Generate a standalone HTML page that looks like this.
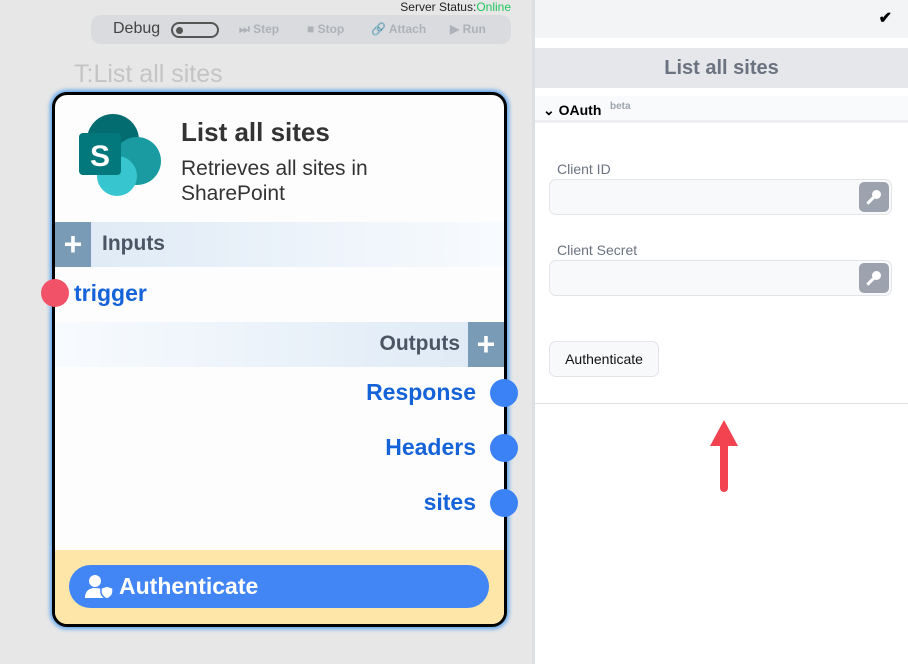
<!DOCTYPE html>
<html><head><meta charset="utf-8"><style>
*{box-sizing:border-box;margin:0;padding:0}
body{width:908px;height:664px;background:#e7e7e7;font-family:"Liberation Sans",sans-serif;position:relative;overflow:hidden}
.abs{position:absolute}
.status{right:397px;top:0;font-size:12px;color:#222}
.dbg{left:91px;top:15px;width:420px;height:29px;background:#d9dbdf;border-radius:10px}
.dbg span{position:absolute;top:7px;font-size:12px;color:#aeb2b8;font-weight:bold}
.ttl{left:74px;top:60px;font-size:25px;color:#c4c4c4}
.node{left:52px;top:92px;width:455px;height:535px;border:3px solid #000;border-radius:15px;background:#fdfdfd;box-shadow:0 0 4px 2px #5aa2ee}
.bar{position:absolute;height:45px;font-size:21px;font-weight:bold;color:#4b5563}
.plus{position:absolute;top:0;width:36px;height:45px;background:#7a9bb5;color:#fff;font-size:32px;text-align:center;line-height:44px;font-weight:bold}
.lbl{position:absolute;font-size:23px;font-weight:bold;color:#1563d8}
.dot{position:absolute;width:28px;height:28px;border-radius:50%;background:#3b82f6}
.panel{left:532px;top:0;width:376px;height:664px;background:#fff;border-left:3px solid #dcdfe3}
.inp{position:absolute;left:14px;width:343px;height:36px;border:1px solid #e2e4e8;border-radius:7px;background:#f8f9fb}
.key{position:absolute;right:2px;top:2px;width:30px;height:30px;background:#9ca3af;border-radius:5px}
.fl{position:absolute;left:22px;font-size:14px;color:#6b7280}
</style></head><body>
<div class="abs status">Server Status:<span style="color:#22c55e">Online</span></div>
<div class="abs dbg">
<span style="left:22px;top:5px;font-size:16px;color:#444;font-weight:normal">Debug</span>
<div class="abs" style="left:80px;top:7px;width:48px;height:16px;border:2px solid #555;border-radius:9px"><div class="abs" style="left:3px;top:3px;width:7px;height:7px;border-radius:50%;background:#555"></div></div>
<span style="left:148px">⏭ Step</span><span style="left:216px">■ Stop</span><span style="left:280px">🔗 Attach</span><span style="left:359px">▶ Run</span>
</div>
<div class="abs ttl">T:List all sites</div>
<div class="abs node">
<svg class="abs" style="left:24px;top:19px" width="84" height="84" viewBox="0 0 84 84">
<circle cx="34" cy="26" r="26" fill="#036c70"/><circle cx="58" cy="47" r="24" fill="#1a9ba1"/><circle cx="38" cy="62" r="20" fill="#37c6d0"/>
<rect x="0" y="19" width="42" height="42" rx="4" fill="#03787c"/>
<text x="21" y="52" font-size="30" font-weight="bold" fill="#fff" text-anchor="middle" font-family="Liberation Sans">S</text></svg>
<div class="abs" style="left:126px;top:22px;font-size:26px;font-weight:bold;color:#333">List all sites</div>
<div class="abs" style="left:126px;top:61px;font-size:21px;color:#333;line-height:25px">Retrieves all sites in<br>SharePoint</div>
<div class="bar" style="left:0;top:127px;width:449px;background:linear-gradient(90deg,#dde9f5,#f8fbfe)"><div class="plus" style="left:0">+</div><span class="abs" style="left:47px;top:10px">Inputs</span></div>
<div class="abs" style="left:-14px;top:184px;width:28px;height:28px;border-radius:50%;background:#f25268"></div>
<div class="lbl" style="left:19px;top:185px">trigger</div>
<div class="bar" style="left:0;top:227px;width:449px;background:linear-gradient(90deg,#f8fbfe,#dde9f5)"><span class="abs" style="right:44px;top:10px">Outputs</span><div class="plus" style="right:0">+</div></div>
<div class="lbl" style="right:28px;top:284px">Response</div><div class="dot" style="right:-14px;top:284px"></div>
<div class="lbl" style="right:28px;top:339px">Headers</div><div class="dot" style="right:-14px;top:339px"></div>
<div class="lbl" style="right:28px;top:394px">sites</div><div class="dot" style="right:-14px;top:394px"></div>
<div class="abs" style="left:0;top:455px;width:449px;height:74px;background:#fde6a8;border-radius:0 0 12px 12px"></div>
<div class="abs" style="left:14px;top:470px;width:420px;height:43px;border-radius:22px;background:#4285f4;color:#fff;font-size:23px;font-weight:bold">
<svg class="abs" style="left:16px;top:10px" width="30" height="24" viewBox="0 0 30 24"><circle cx="10" cy="6" r="6" fill="#fff"/><path d="M0 23c0-7 4-10 10-10s8 2 9 4v6z" fill="#fff"/><path d="M22 11l6 2v4c0 3-3 6-6 7-3-1-6-4-6-7v-4z" fill="#fff" stroke="#4285f4" stroke-width="1.5"/></svg>
<span class="abs" style="left:50px;top:8px">Authenticate</span></div>
</div>
<div class="abs panel">
<div class="abs" style="left:0;top:0;width:373px;height:38px;background:#f3f4f6"></div>
<div class="abs" style="right:16px;top:8px;font-size:16px;font-weight:bold">✔</div>
<div class="abs" style="left:0;top:48px;width:373px;height:40px;background:#e5e7eb;text-align:center;font-size:20px;font-weight:bold;color:#6b7280;line-height:40px">List all sites</div>
<div class="abs" style="left:0;top:96px;width:373px;height:27px;background:#f9fafb;border-bottom:3px solid #eceef1"></div>
<div class="abs" style="left:8px;top:102px;font-size:14px;font-weight:bold;color:#000">⌄ OAuth</div>
<div class="abs" style="left:75px;top:101px;font-size:10px;font-weight:bold;color:#9ca3af">beta</div>
<div class="fl" style="top:161px">Client ID</div>
<div class="inp" style="top:179px"><div class="key"></div></div>
<div class="fl" style="top:242px">Client Secret</div>
<div class="inp" style="top:260px"><div class="key"></div></div>
<div class="abs" style="left:14px;top:341px;width:110px;height:36px;border:1px solid #e2e4e8;border-radius:7px;background:#f8f9fb;font-size:14px;color:#111;text-align:center;line-height:34px">Authenticate</div>
<div class="abs" style="left:0;top:403px;width:373px;height:1px;background:#dcdfe3"></div>
<svg class="abs" style="left:172px;top:416px" width="34" height="78" viewBox="0 0 34 78"><path d="M17 4L3 30h10v42a4 4 0 008 0V30h10z" fill="#f44350"/></svg>
</div>
<style>.key::after{content:"";position:absolute;left:13px;top:8px;width:9px;height:9px;border-radius:50%;background:#fff}.key::before{content:"";position:absolute;left:7px;top:17px;width:9px;height:3px;background:#fff;transform:rotate(-45deg)}</style>
</body></html>
